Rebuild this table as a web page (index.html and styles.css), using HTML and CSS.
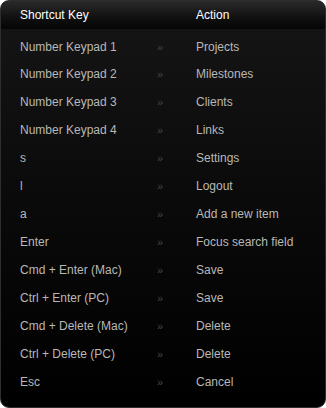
FILE: index.html
```html
<!DOCTYPE html>
<html lang="en">
<head>
  <meta charset="UTF-8">
  <title>Keyboard Shortcuts</title>
  <link rel="stylesheet" href="styles.css">
</head>
<body>
  <div id="shortcuts">
    <table>
      <thead>
        <tr><th class="key">Shortcut Key</th><th class="sep"></th><th class="action">Action</th></tr>
      </thead>
      <tbody>
        <tr><td class="key">Number Keypad 1</td><td class="sep">&raquo;</td><td class="action">Projects</td></tr>
        <tr><td class="key">Number Keypad 2</td><td class="sep">&raquo;</td><td class="action">Milestones</td></tr>
        <tr><td class="key">Number Keypad 3</td><td class="sep">&raquo;</td><td class="action">Clients</td></tr>
        <tr><td class="key">Number Keypad 4</td><td class="sep">&raquo;</td><td class="action">Links</td></tr>
        <tr><td class="key">s</td><td class="sep">&raquo;</td><td class="action">Settings</td></tr>
        <tr><td class="key">l</td><td class="sep">&raquo;</td><td class="action">Logout</td></tr>
        <tr><td class="key">a</td><td class="sep">&raquo;</td><td class="action">Add a new item</td></tr>
        <tr><td class="key">Enter</td><td class="sep">&raquo;</td><td class="action">Focus search field</td></tr>
        <tr><td class="key">Cmd + Enter (Mac)</td><td class="sep">&raquo;</td><td class="action">Save</td></tr>
        <tr><td class="key">Ctrl + Enter (PC)</td><td class="sep">&raquo;</td><td class="action">Save</td></tr>
        <tr><td class="key">Cmd + Delete (Mac)</td><td class="sep">&raquo;</td><td class="action">Delete</td></tr>
        <tr><td class="key">Ctrl + Delete (PC)</td><td class="sep">&raquo;</td><td class="action">Delete</td></tr>
        <tr><td class="key">Esc</td><td class="sep">&raquo;</td><td class="action">Cancel</td></tr>
      </tbody>
    </table>
  </div>
</body>
</html>
```

FILE: styles.css
```css
html, body {
  margin: 0;
  padding: 0;
  background: #fff;
}
body {
  font-family: "Liberation Sans", Arial, sans-serif;
  font-size: 12px;
}
#shortcuts {
  width: 326px;
  height: 408px;
  box-sizing: border-box;
  border: 1px solid #2e2e2e;
  border-radius: 9px;
  overflow: hidden;
  background: linear-gradient(180deg, #161616 0%, #0b0b0b 45%, #000 100%);
}
table {
  width: 100%;
  border-collapse: collapse;
}
thead tr {
  height: 28px;
  background: linear-gradient(180deg, #2a2a2a 0%, #101010 60%, #050505 100%);
}
th {
  color: #fff;
  font-weight: normal;
  text-align: left;
  padding: 0;
}
tbody tr {
  height: 28px;
}
tbody tr:first-child {
  height: 31px;
}
tbody tr:first-child td {
  padding-top: 4px;
}
td {
  padding: 0;
  color: #b8b8b8;
}
.key {
  width: 137px;
  padding-left: 19px;
}
.sep {
  width: 39px;
  color: #444;
  font-size: 11px;
}
.action {
  padding-left: 0;
}
```
